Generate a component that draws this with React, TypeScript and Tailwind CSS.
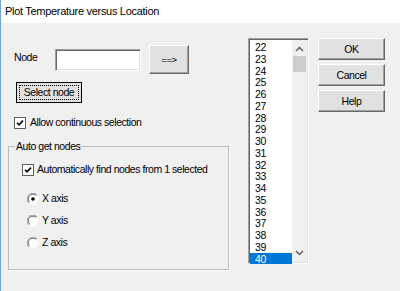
import React from "react";

const raised =
  "bg-[#e1e1e1] border border-t-white border-l-white border-b-[#696969] border-r-[#696969] shadow-[inset_-1px_-1px_0_#a0a0a0,inset_1px_1px_0_#e3e3e3]";
const sunken =
  "border border-t-[#a0a0a0] border-l-[#a0a0a0] border-b-white border-r-white shadow-[inset_1px_1px_0_#696969,inset_-1px_-1px_0_#e3e3e3]";

function CheckBox() {
  return (
    <div className="w-[12px] h-[12px] bg-white border border-[#5f5f5f] shrink-0 flex items-center justify-center">
      <svg width="10" height="10" viewBox="0 0 10 10">
        <path d="M2 4.8 L4 6.8 L8 2.6" stroke="#000" strokeWidth="1.6" fill="none" />
      </svg>
    </div>
  );
}

function Radio({ checked }: { checked?: boolean }) {
  return (
    <svg width="12" height="12" viewBox="0 0 12 12" className="shrink-0">
      <circle cx="6" cy="6" r="5.5" fill="#fff" />
      <path d="M1.8 10 A5.5 5.5 0 0 1 10 1.8" stroke="#a0a0a0" strokeWidth="1" fill="none" />
      <path d="M2.6 9.2 A4.5 4.5 0 0 1 9.2 2.6" stroke="#696969" strokeWidth="1" fill="none" />
      {checked && <circle cx="6" cy="6" r="1.8" fill="#000" />}
    </svg>
  );
}

const nodes = Array.from({ length: 19 }, (_, i) => 22 + i);

export default function App() {
  return (
    <div className="w-[400px] h-[291px] bg-[#f0f0f0] border-l border-[#6ea3d9] flex flex-col text-black font-['Liberation_Sans',Arial,sans-serif] text-[10.5px] tracking-[-0.45px] leading-[13px] overflow-hidden">
      {/* Title bar */}
      <div className="h-[23px] bg-white flex items-center pl-[4px] text-[11px] tracking-[-0.3px]">
        Plot Temperature versus Location
      </div>

      <div className="flex flex-row items-start pl-[7px]">
        {/* Left side */}
        <div className="w-[221px] flex flex-col">
          <div className="mt-[22px] flex items-start h-[29px]">
            <span className="ml-[6px] w-[41px] mt-[6px]">Node</span>
            <div className={`mt-[4px] w-[86px] h-[22px] bg-white ${sunken}`} />
            <div className={`ml-[8px] w-[40px] h-[29px] flex items-center justify-center text-[9.5px] ${raised}`}>
              ==&gt;
            </div>
          </div>

          <div className="mt-[8px] ml-[8px] w-[66px] h-[21px] border border-black bg-[#e1e1e1] flex p-[2px]">
            <div className="flex-1 border border-dotted border-black flex items-center justify-center">
              Select node
            </div>
          </div>

          <div className="mt-[13px] ml-[6px] h-[13px] flex items-center gap-[4px]">
            <CheckBox />
            <span>Allow continuous selection</span>
          </div>

          <fieldset className="mt-[11px] h-[130px] border border-[#bcbcbc] shadow-[1px_1px_0_#fff]">
            <legend className="ml-[6px] px-[1px]">Auto get nodes</legend>
            <div className="mt-[10px] pl-[13px] h-[13px] flex items-center gap-[3px]">
              <CheckBox />
              <span>Automatically find nodes from 1 selected</span>
            </div>
            <div className="mt-[16px] pl-[18px] flex flex-col gap-[9px]">
              <div className="h-[13px] flex items-center gap-[3px]">
                <Radio checked />
                <span>X axis</span>
              </div>
              <div className="h-[13px] flex items-center gap-[3px]">
                <Radio />
                <span>Y axis</span>
              </div>
              <div className="h-[13px] flex items-center gap-[3px]">
                <Radio />
                <span>Z axis</span>
              </div>
            </div>
          </fieldset>
        </div>

        {/* Node list */}
        <div className={`ml-[19px] mt-[15px] w-[61px] h-[226px] bg-white flex p-[1px] ${sunken}`}>
          <div className="flex-1 flex flex-col pt-[1px]">
            {nodes.map((n) => (
              <div
                key={n}
                className={`h-[11.75px] leading-[12px] pl-[5px] ${n === 40 ? "bg-[#0078d7] text-white" : ""}`}
              >
                {n}
              </div>
            ))}
          </div>
          <div className="w-[15px] bg-[#f0f0f0] flex flex-col items-center">
            <svg width="9" height="6" viewBox="0 0 9 6" className="mt-[6px]">
              <path d="M1 5 L4.5 1.5 L8 5" stroke="#606060" strokeWidth="1.5" fill="none" />
            </svg>
            <div className="mt-[4px] w-[13px] h-[16px] bg-[#cdcdcd]" />
            <div className="flex-1" />
            <svg width="9" height="6" viewBox="0 0 9 6" className="mb-[6px]">
              <path d="M1 1 L4.5 4.5 L8 1" stroke="#606060" strokeWidth="1.5" fill="none" />
            </svg>
          </div>
        </div>

        {/* Buttons */}
        <div className="ml-[9px] mt-[15px] w-[67px] flex flex-col gap-[4px]">
          <div className={`h-[22px] flex items-center justify-center ${raised}`}>OK</div>
          <div className={`h-[22px] flex items-center justify-center ${raised}`}>Cancel</div>
          <div className={`h-[22px] flex items-center justify-center ${raised}`}>Help</div>
        </div>
      </div>
    </div>
  );
}
